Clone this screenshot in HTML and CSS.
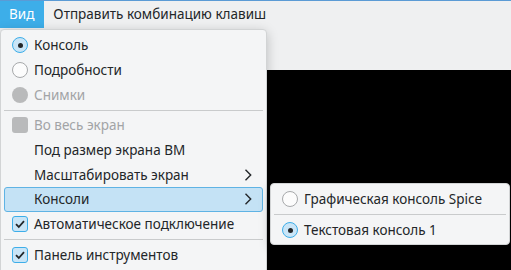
FILE: index.html
```html
<!DOCTYPE html>
<html lang="ru">
<head>
    <meta charset="UTF-8">
    <meta name="viewport" content="width=device-width, initial-scale=1.0">
    <title>Вид</title>
    <link rel="stylesheet" href="styles.css">
</head>
<body>
<div class="window">
    <div class="menubar">
        <div class="mb-item active">Вид</div>
        <div class="mb-item">Отправить комбинацию клавиш</div>
    </div>
    <div class="toolbar-area"></div>
    <div class="display"></div>

    <!-- main popup -->
    <div class="menu main-menu">
        <div class="item"><span class="radio on"></span>Консоль</div>
        <div class="item"><span class="radio"></span>Подробности</div>
        <div class="item disabled"><span class="radio off"></span>Снимки</div>
        <div class="sep"></div>
        <div class="item disabled"><span class="check off"></span>Во весь экран</div>
        <div class="item"><span class="blank"></span>Под размер экрана ВМ</div>
        <div class="item"><span class="blank"></span>Масштабировать экран
            <svg class="arrow" width="8" height="12" viewBox="0 0 8 12"><path d="M1.5 0.8 L6.7 6 L1.5 11.2" fill="none" stroke="#232629" stroke-width="1.4"/></svg>
        </div>
        <div class="item hover"><span class="blank"></span>Консоли
            <svg class="arrow" width="8" height="12" viewBox="0 0 8 12"><path d="M1.5 0.8 L6.7 6 L1.5 11.2" fill="none" stroke="#232629" stroke-width="1.4"/></svg>
        </div>
        <div class="item"><span class="check on"><svg width="16" height="16" viewBox="0 0 16 16"><path d="M4 8.2 L6.8 11 L12 5.2" fill="none" stroke="#232629" stroke-width="1.8"/></svg></span>Автоматическое подключение</div>
        <div class="sep"></div>
        <div class="item"><span class="check on"><svg width="16" height="16" viewBox="0 0 16 16"><path d="M4 8.2 L6.8 11 L12 5.2" fill="none" stroke="#232629" stroke-width="1.8"/></svg></span>Панель инструментов</div>
    </div>

    <!-- consoles submenu -->
    <div class="menu sub-menu">
        <div class="item"><span class="radio"></span>Графическая консоль Spice</div>
        <div class="sep"></div>
        <div class="item"><span class="radio on"></span>Текстовая консоль 1</div>
    </div>
</div>
</body>
</html>
```

FILE: styles.css
```css
body {
    margin: 0;
    font-family: "Noto Sans", sans-serif;
    font-size: 13.5px;
    color: #232629;
    overflow: hidden;
}
.window {
    position: relative;
    width: 511px;
    height: 270px;
    overflow: hidden;
    background: #000;
}
.menubar {
    display: flex;
    height: 27px;
    background: #eff0f1;
    border-top: 1px solid #5b9bd5;
}
.mb-item {
    padding: 0 10px 0 9px;
    line-height: 27px;
}
.mb-item.active {
    background: #3daee9;
    color: #fff;
}
.toolbar-area {
    height: 42px;
    background: #eff0f1;
}
.display {
    height: 200px;
    background: #000;
}
.menu {
    position: absolute;
    box-sizing: border-box;
    background: #f4f5f6;
    border: 1px solid #d2d4d5;
    border-radius: 4px;
    padding: 3px 0;
    box-shadow: 0 3px 12px rgba(0, 0, 0, 0.22);
}
.main-menu {
    left: 0;
    top: 29px;
    width: 267px;
    height: 260px;
}
.sub-menu {
    left: 270px;
    top: 183px;
    width: 240px;
    padding-bottom: 2px;
}
.item {
    display: flex;
    align-items: center;
    box-sizing: border-box;
    height: 24.7px;
    margin: 0 3px;
    padding: 0 10px 0 7px;
    border: 1px solid transparent;
    border-radius: 3px;
    white-space: nowrap;
}
.item.hover {
    background: #c4e2f5;
    border-color: #5fb3e4;
}
.item.disabled {
    color: #a2a4a6;
}
.sep {
    height: 6px;
    margin: 0 3px;
    display: flex;
    align-items: center;
}
.sep::before {
    content: "";
    flex: 1;
    height: 1px;
    background: #c9cbcc;
}
.arrow {
    margin-left: auto;
}
.radio, .check, .blank {
    flex: none;
    box-sizing: border-box;
    width: 16px;
    height: 16px;
    margin-right: 6px;
}
.radio {
    border-radius: 50%;
    border: 1px solid #a7a9ab;
    background: #fcfcfc;
    position: relative;
}
.radio.on {
    border-color: #3daee9;
    background: #c9e5f7;
}
.radio.on::after {
    content: "";
    position: absolute;
    left: 4.5px;
    top: 4.5px;
    width: 5px;
    height: 5px;
    border-radius: 50%;
    background: #232629;
}
.radio.off {
    border: none;
    background: #b9babb;
}
.check {
    border-radius: 3px;
    border: 1px solid #3daee9;
    background: #c9e5f7;
    display: flex;
    align-items: center;
    justify-content: center;
}
.check svg {
    margin: -1px;
}
.check.off {
    border: none;
    background: #b9babb;
}
```
